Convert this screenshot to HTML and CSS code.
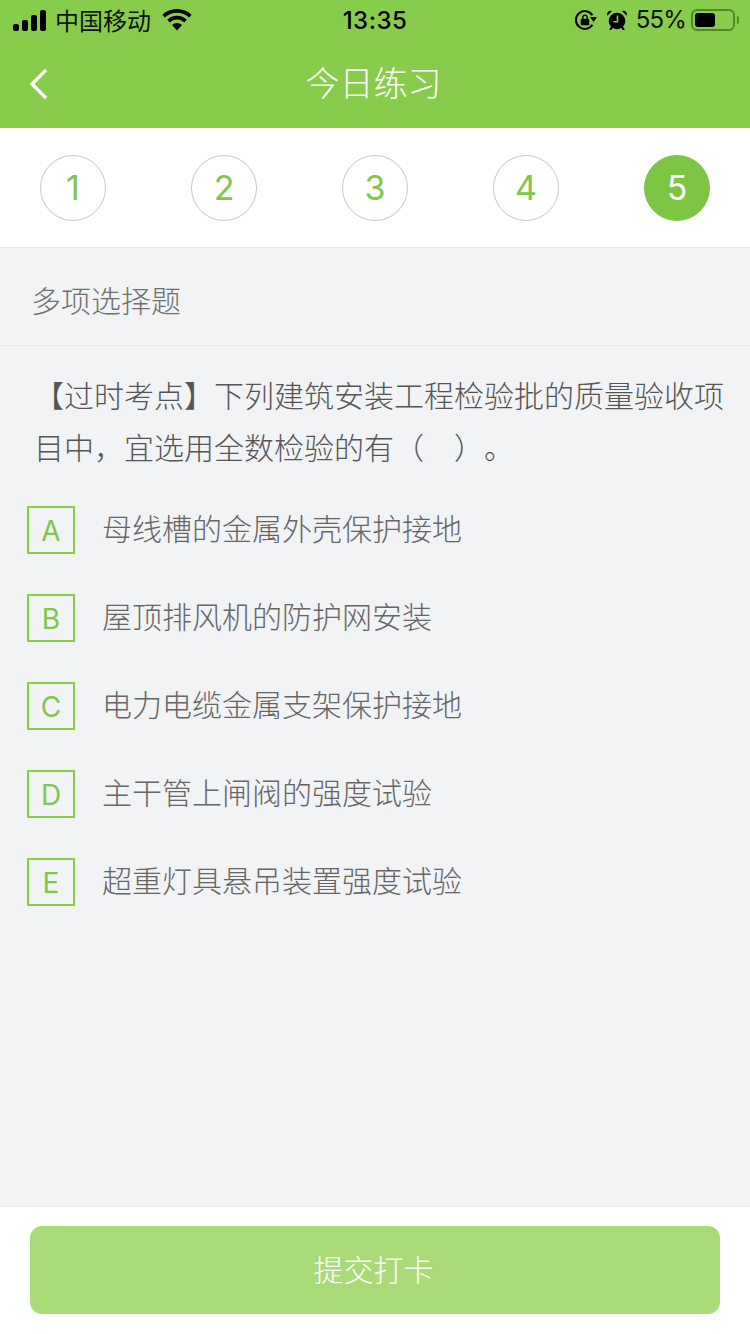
FILE: index.html
```html
<!DOCTYPE html>
<html lang="zh-CN">
<head>
<meta charset="utf-8">
<title>今日练习</title>
<link rel="stylesheet" href="styles.css">
</head>
<body>
<div class="page">
  <header class="top">
    <div class="status">
      <div class="status-left">
        <svg class="signal" width="33" height="21" viewBox="0 0 33 21"><rect x="0" y="14" width="6" height="7" rx="2"/><rect x="9" y="10" width="6" height="11" rx="2"/><rect x="18" y="5" width="6" height="16" rx="2"/><rect x="27" y="0" width="6" height="21" rx="2"/></svg>
        <span class="carrier">中国移动</span>
        <svg class="wifi" width="30" height="22" viewBox="0 0 30 22"><path d="M15 0C9.300 0 4.200 2.200.4 5.800l2.500 2.700C6 5.500 10.300 3.700 15 3.700s9 1.800 12.100 4.800l2.500-2.700C25.800 2.200 20.700 0 15 0z"/><path d="M15 6.800c-3.800 0-7.200 1.500-9.700 3.900l2.600 2.700c1.800-1.800 4.300-2.900 7.100-2.900s5.300 1.100 7.100 2.900l2.600-2.700c-2.500-2.400-5.900-3.900-9.700-3.900z"/><path d="M15 14c-2 0-3.700.8-5 2l5 5.600 5-5.600c-1.300-1.200-3-2-5-2z"/></svg>
      </div>
      <div class="time">13:35</div>
      <div class="status-right">
        <svg class="rotlock" width="22" height="20" viewBox="0 0 22 20"><path d="M17.400 14.800A8.900 8.900 0 1 1 17.400 5.200" fill="none" stroke="#000" stroke-width="2"/><path d="M15 7h7l-3.500 5z"/><rect x="5.700" y="8.800" width="8.600" height="6.400" rx="1"/><path d="M7.800 9V7.300a2.200 2.200 0 0 1 4.400 0V9" fill="none" stroke="#000" stroke-width="1.400"/></svg>
        <svg class="alarm" width="20" height="20" viewBox="0 0 20 20"><circle cx="10" cy="11" r="8.300"/><path d="M.3 5.800C-.6 2.600 1.800.2 5 1zM19.700 5.800c.9-3.200-1.500-5.600-4.700-4.800z"/><path d="M5 17 3.200 20M15 17l1.800 3" stroke="#000" stroke-width="2.200" fill="none"/><path d="M10.500 5.500v6.300H6.500" stroke="#88cc4c" stroke-width="1.600" fill="none"/></svg>
        <span class="pct">55%</span>
        <div class="battery"><div class="battery-fill"></div></div>
        <div class="battery-cap"></div>
      </div>
    </div>
    <nav class="navbar">
      <svg class="back" width="20" height="32" viewBox="0 0 20 32"><path d="M17 2 3 16l14 14" fill="none" stroke="#fff" stroke-width="3.400"/></svg>
      <h1 class="title">今日练习</h1>
    </nav>
  </header>

  <section class="steps">
    <div class="step">1</div>
    <div class="step">2</div>
    <div class="step">3</div>
    <div class="step">4</div>
    <div class="step step-active">5</div>
  </section>

  <main class="content">
    <div class="kind">多项选择题</div>
    <p class="question">【过时考点】下列建筑安装工程检验批的质量验收项目中，宜选用全数检验的有（　）。</p>
    <ul class="options">
      <li class="option"><span class="letter">A</span><span class="opt-text">母线槽的金属外壳保护接地</span></li>
      <li class="option"><span class="letter">B</span><span class="opt-text">屋顶排风机的防护网安装</span></li>
      <li class="option"><span class="letter">C</span><span class="opt-text">电力电缆金属支架保护接地</span></li>
      <li class="option"><span class="letter">D</span><span class="opt-text">主干管上闸阀的强度试验</span></li>
      <li class="option"><span class="letter">E</span><span class="opt-text">超重灯具悬吊装置强度试验</span></li>
    </ul>
  </main>

  <footer class="footer">
    <button class="submit" type="button">提交打卡</button>
  </footer>
</div>
</body>
</html>
```
FILE: styles.css
```css
* { box-sizing: border-box; margin: 0; padding: 0; }
html, body { width: 750px; height: 1334px; overflow: hidden; }
body {
  font-family: "Noto Sans CJK SC", "Liberation Sans", sans-serif;
  background: #f2f3f5;
}
.page { display: flex; flex-direction: column; height: 1334px; }

.top { background: #88cc4c; height: 128px; flex: none; }
.status {
  height: 40px;
  display: flex;
  align-items: center;
  justify-content: space-between;
  position: relative;
  padding: 0 11px 0 13px;
  color: #0b1505;
}
.status-left, .status-right { display: flex; align-items: center; }
.status svg { fill: #000; display: block; }
.signal { margin-right: 9px; }
.carrier { font-size: 24px; font-weight: 400; line-height: 40px; }
.wifi { margin-left: 11px; }
.time {
  position: absolute;
  left: 0; right: 0;
  top: 1px;
  text-align: center;
  font: 500 24px/40px Inter, "Liberation Sans", sans-serif;
  letter-spacing: 0.5px;
  color: #000;
}
.rotlock { margin-right: 10px; }
.alarm { margin-right: 9px; }
.pct { font: 400 24px/40px Inter, "Liberation Sans", sans-serif; margin-right: 5px; color: #111; letter-spacing: -0.8px; }
.battery {
  width: 44px; height: 22px;
  border: 2px solid #4f8a28;
  border-radius: 6px;
  padding: 2px;
}
.battery-fill { width: 20px; height: 14px; background: #000; border-radius: 3px; }
.battery-cap { width: 2px; height: 8px; background: #4f8a28; margin-left: 2px; border-radius: 0 2px 2px 0; }

.navbar {
  height: 88px;
  display: flex;
  align-items: center;
  justify-content: center;
  position: relative;
}
.back { position: absolute; left: 29px; top: 28px; }
.title { font-size: 34px; font-weight: 300; color: #fff; line-height: 84px; padding: 0 3px 4px 0; }

.steps {
  flex: none;
  height: 120px;
  background: #fff;
  border-bottom: 1px solid #e6e7e9;
  display: flex;
  justify-content: space-between;
  padding: 27px 40px 0;
}
.step {
  width: 66px; height: 66px;
  border: 1px solid #c8c8c8;
  border-radius: 50%;
  display: flex;
  align-items: center;
  justify-content: center;
  font: 400 34px/1 Inter, "Liberation Sans", sans-serif;
  color: #7fc64a;
}
.step-active { background: #7cc644; border-color: #7cc644; color: #fff; }

.content { flex: 1; min-height: 0; }
.kind {
  height: 98px;
  border-bottom: 1px solid #e6e7e9;
  padding-left: 31px;
  font-size: 30px;
  font-weight: 300;
  line-height: 102px;
  color: #707070;
}
.question {
  padding: 22px 20px 0 34px;
  font-size: 30px;
  font-weight: 300;
  line-height: 52px;
  color: #555;
  text-spacing-trim: space-all;
}
.options { list-style: none; padding: 34px 0 0 27px; }
.option { display: flex; align-items: center; height: 48px; margin-bottom: 40px; }
.letter {
  width: 48px; height: 48px;
  flex: none;
  border: 2px solid #88cc4c;
  display: flex;
  align-items: center;
  justify-content: center;
  padding-top: 2px;
  font: 400 28px/1 Inter, "Liberation Sans", sans-serif;
  color: #7fc64a;
}
.opt-text {
  margin-left: 27px;
  font-size: 30px;
  font-weight: 300;
  line-height: 48px;
  color: #666;
  position: relative;
  top: -3px;
}

.footer {
  flex: none;
  height: 128px;
  background: #fff;
  border-top: 1px solid #e8e9ec;
  padding: 19px 30px 0;
}
.submit {
  display: block;
  width: 690px; height: 88px;
  border: 0;
  border-radius: 12px;
  background: #a9dc79;
  color: #fff;
  font-family: inherit;
  font-size: 30px;
  font-weight: 300;
  padding: 0 3px 4px 0;
}
```
